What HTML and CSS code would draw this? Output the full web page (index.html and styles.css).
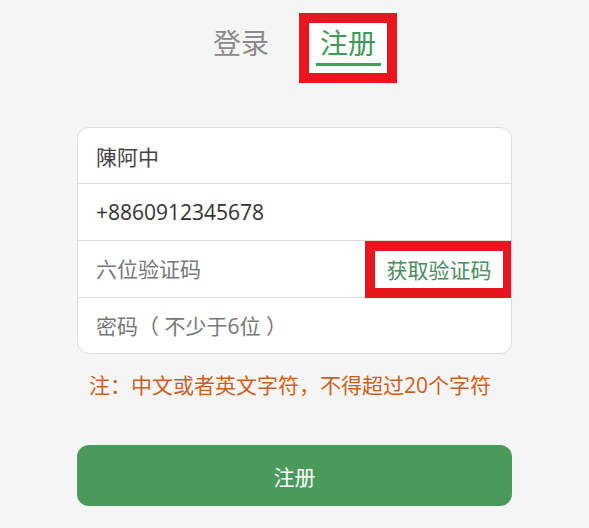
FILE: index.html
```html
<!DOCTYPE html>
<html lang="zh-CN">
<head>
    <meta charset="UTF-8">
    <meta name="viewport" content="width=device-width, initial-scale=1.0">
    <title>注册</title>
    <link rel="stylesheet" href="styles.css">
</head>
<body>
    <div class="tabs">
        <div class="tab">登录</div>
        <div class="tab active marked">注册</div>
    </div>

    <form class="form">
        <div class="card">
            <div class="row">
                <input type="text" value="陳阿中" class="name">
            </div>
            <div class="row">
                <input type="text" value="+8860912345678" class="phone">
            </div>
            <div class="row">
                <input type="text" placeholder="六位验证码">
                <button type="button" class="code-btn marked">获取验证码</button>
            </div>
            <div class="row">
                <input type="password" placeholder="密码（ 不少于6位 ）">
            </div>
        </div>

        <p class="note">注：中文或者英文字符，不得超过20个字符</p>

        <button type="button" class="submit">注册</button>
    </form>
</body>
</html>
```

FILE: styles.css
```css
body {
    font-family: "Open Sans", "Noto Sans CJK SC", sans-serif;
    background-color: #f5f5f5;
    margin: 0;
}
.tabs {
    display: flex;
    justify-content: center;
    gap: 29px;
    padding-top: 23px;
}
.tab {
    width: 78px;
    height: 50px;
    box-sizing: border-box;
    padding-top: 2px;
    font-size: 28px;
    line-height: 36px;
    text-align: center;
    color: #8a8a8a;
}
.tab::after {
    content: "";
    display: block;
    width: 65px;
    height: 3px;
    margin: 2px auto 0;
}
.tab.active {
    color: #3f9a5a;
    background-color: #fff;
}
.tab.active::after {
    background-color: #3aa55a;
}
.marked {
    outline: 10px solid #e8161f;
}
.form {
    width: 435px;
    margin: 54px auto 0;
}
.card {
    background-color: #fff;
    border: 1px solid #dcdcdc;
    border-radius: 12px;
    overflow: hidden;
}
.row {
    display: flex;
    align-items: center;
    height: 56px;
    border-bottom: 1px solid #dcdcdc;
}
.row:first-child {
    height: 55px;
}
.row:last-child {
    height: 55px;
    border-bottom: none;
}
.row input {
    flex: 1;
    min-width: 0;
    border: none;
    outline: none;
    background: transparent;
    padding: 0 0 0 18px;
    font-family: inherit;
    font-size: 21px;
    color: #444;
}
.row input::placeholder {
    color: #777;
}
.row .phone {
    color: #333;
}
.code-btn {
    width: 128px;
    height: 37px;
    margin-right: 8px;
    border: none;
    background-color: #fff;
    font-family: inherit;
    font-size: 21px;
    color: #4a8c5e;
    cursor: pointer;
    padding: 0;
}
.note {
    margin: 16px 0 0;
    padding-left: 12px;
    font-size: 21px;
    line-height: 30px;
    color: #cd5f1e;
}
.submit {
    display: block;
    width: 100%;
    height: 61px;
    margin-top: 45px;
    border: none;
    border-radius: 12px;
    background-color: #4a9a5c;
    color: #fff;
    font-family: inherit;
    font-size: 21px;
    cursor: pointer;
}
```
